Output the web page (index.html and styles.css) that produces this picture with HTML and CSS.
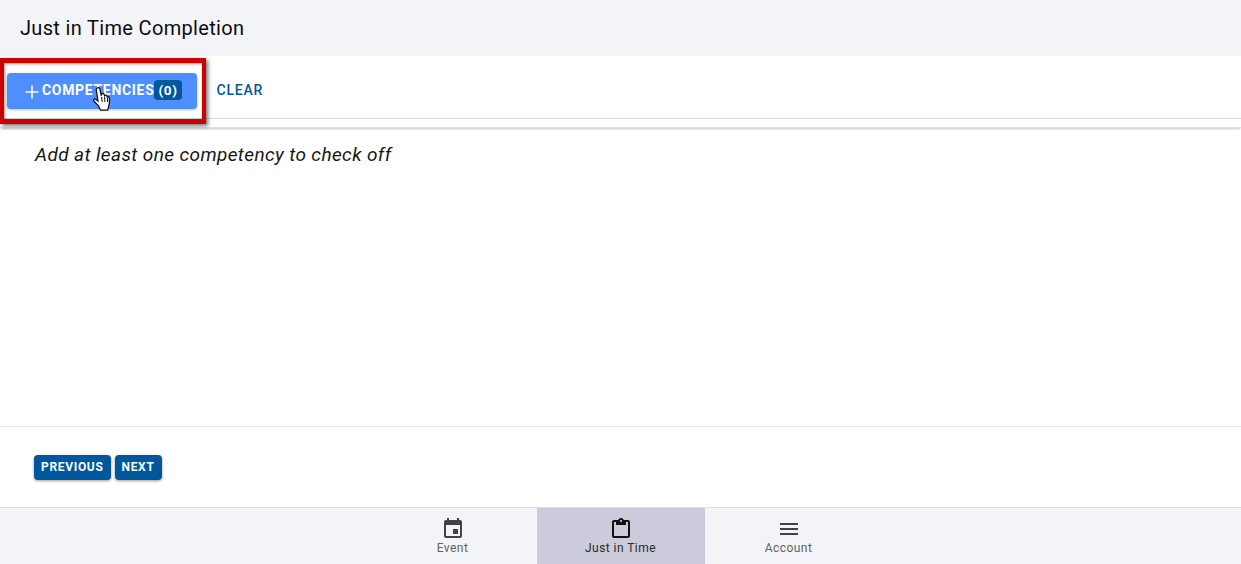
FILE: index.html
```html
<!DOCTYPE html>
<html lang="en">
<head>
<meta charset="utf-8">
<title>Just in Time Completion</title>
<link rel="stylesheet" href="styles.css">
</head>
<body>
<div class="app">
  <header class="title-bar"><h1>Just in Time Completion</h1></header>
  <div class="toolbar-wrap">
    <div class="toolbar">
      <button class="btn-primary">
        <svg class="plus" viewBox="0 0 14 14" width="14" height="14"><path d="M7 0.5v13M0.5 7h13" stroke="#fff" stroke-width="1.6" fill="none"/></svg>
        <span>Competencies</span>
        <span class="count">(0)</span>
      </button>
      <button class="btn-text">Clear</button>
    </div>
    <div class="highlight"></div>
    <svg class="cursor" viewBox="0 0 16 22" width="21" height="28">
      <path d="M4.600 1.600c1-.6 2 0 2.200 1l1 5 .3-1.300c.6-.8 1.700-.6 2 .3l.3 1c.5-.8 1.600-.6 1.900.3l.2.8c.6-.5 1.500-.2 1.700.6.3 1.800.1 4.300-.5 6.300l-.8 3.400H7.200L5.600 15.600 2 11.800c-.7-.9.2-2.100 1.300-1.500l1.900 1.500L3.900 3.200c-.1-.7.200-1.300.7-1.600z" fill="#fff" stroke="#111" stroke-width="1"/>
      <path d="M8 8.500l.6 4M10.400 8.500l.3 4M12.700 9.500l.1 3" stroke="#111" stroke-width=".8" fill="none"/>
    </svg>
  </div>
  <main class="content"><p>Add at least one competency to check off</p></main>
  <div class="pager">
    <button class="btn-dark">Previous</button>
    <button class="btn-dark">Next</button>
  </div>
  <nav class="tabs">
    <a class="tab">
      <svg viewBox="0 0 24 24" width="24" height="24"><path fill="#424242" d="M17 12h-5v5h5v-5zM16 1v2H8V1H6v2H5c-1.110 0-1.990.9-1.990 2L3 19c0 1.100.89 2 2 2h14c1.100 0 2-.9 2-2V5c0-1.100-.9-2-2-2h-1V1h-2zm3 18H5V8h14v11z"/></svg>
      <span>Event</span>
    </a>
    <a class="tab active">
      <svg viewBox="0 0 24 24" width="24" height="24"><path fill="#111" d="M19 3h-4.180C14.400 1.840 13.300 1 12 1s-2.400.84-2.820 2H5c-1.100 0-2 .9-2 2v14c0 1.100.9 2 2 2h14c1.100 0 2-.9 2-2V5c0-1.100-.9-2-2-2zm-7 0c.55 0 1 .45 1 1s-.45 1-1 1-1-.45-1-1 .45-1 1-1zm7 16H5V5h2v3h10V5h2v14z"/></svg>
      <span>Just in Time</span>
    </a>
    <a class="tab">
      <svg viewBox="0 0 24 24" width="24" height="24"><path fill="#424242" d="M3 18h18v-2H3v2zm0-5h18v-2H3v2zm0-7v2h18V6H3z"/></svg>
      <span>Account</span>
    </a>
  </nav>
</div>
</body>
</html>
```
FILE: styles.css
```css
* { box-sizing: border-box; }
html, body { margin: 0; height: 100%; background: #fff; }
body { font-family: Roboto, "Liberation Sans", sans-serif; overflow: hidden; }
button { font-family: inherit; border: 0; cursor: pointer; }

.app { display: flex; flex-direction: column; height: 564px; }

.title-bar {
  height: 56px;
  flex: none;
  background: #f3f4f8;
  display: flex;
  align-items: center;
  padding-left: 20px;
}
.title-bar h1 {
  margin: 0;
  font-size: 20px;
  font-weight: 400;
  letter-spacing: .33px;
  color: #0c0c0c;
}

.toolbar-wrap {
  position: relative;
  flex: none;
  height: 72px;
  border-bottom: 1px solid #e0e0e0;
  box-shadow: 0 2px 2px -1px rgba(0,0,0,.22);
}
.toolbar {
  height: 63px;
  border-bottom: 1px solid #d9d9de;
  display: flex;
  align-items: flex-start;
  padding: 17px 0 0 7px;
  gap: 8px;
}
.btn-primary {
  width: 190px;
  height: 36px;
  background: #4f8eff;
  color: #fff;
  border-radius: 4px;
  display: flex;
  align-items: center;
  padding: 0 0 2px 18px;
  font-size: 14px;
  font-weight: 700;
  letter-spacing: .68px;
  text-transform: uppercase;
  box-shadow: 0 1px 3px rgba(0,0,0,.25);
}
.plus { margin: 3px 3px 0 0; flex: none; }
.count {
  background: #01579b;
  border-radius: 4px;
  padding: 0 4px;
  line-height: 20px;
  height: 20px;
  font-size: 13.500px;
}
.btn-text {
  background: none;
  color: #01579b;
  height: 36px;
  padding: 0 12px 2px 11.500px;
  font-size: 14px;
  font-weight: 500;
  letter-spacing: .8px;
  text-transform: uppercase;
}
.highlight {
  position: absolute;
  left: 0;
  top: 2px;
  width: 206px;
  height: 66px;
  border-style: solid;
  border-width: 5px 4px 5px 4px;
  border-color: #cc0000;
  box-shadow: 2px 2px 4px rgba(0,0,0,.55), inset 1px 1px 3px rgba(0,0,0,.4);
  pointer-events: none;
}
.cursor { position: absolute; left: 91px; top: 30px; }

.content { flex: 1; border-bottom: 1px solid #e4e4e8; padding: 16px 35px 0; }
.content p {
  margin: 0;
  font-size: 19px;
  font-style: italic;
  letter-spacing: .39px;
  line-height: 22px;
  color: #161616;
}

.pager {
  flex: none;
  height: 81px;
  display: flex;
  align-items: flex-start;
  gap: 4px;
  padding: 28px 0 0 34px;
  border-bottom: 1px solid #e0e0e4;
}
.btn-dark {
  height: 25px;
  padding: 0 7px 1px;
  background: #01579b;
  color: #fff;
  border-radius: 4px;
  font-size: 12px;
  font-weight: 700;
  letter-spacing: .68px;
  text-transform: uppercase;
  box-shadow: 0 1px 3px rgba(0,0,0,.4);
}

.tabs {
  flex: none;
  height: 56px;
  background: #f3f4f8;
  display: flex;
  justify-content: center;
}
.tab {
  width: 168px;
  display: flex;
  flex-direction: column;
  align-items: center;
  padding-top: 9px;
  color: #616161;
  font-size: 12px;
  letter-spacing: .45px;
  line-height: 14px;
}
.tab svg { display: block; width: 24px; height: 24px; }
.tab.active { background: #cccbdb; color: #2a2a2a; }
```
